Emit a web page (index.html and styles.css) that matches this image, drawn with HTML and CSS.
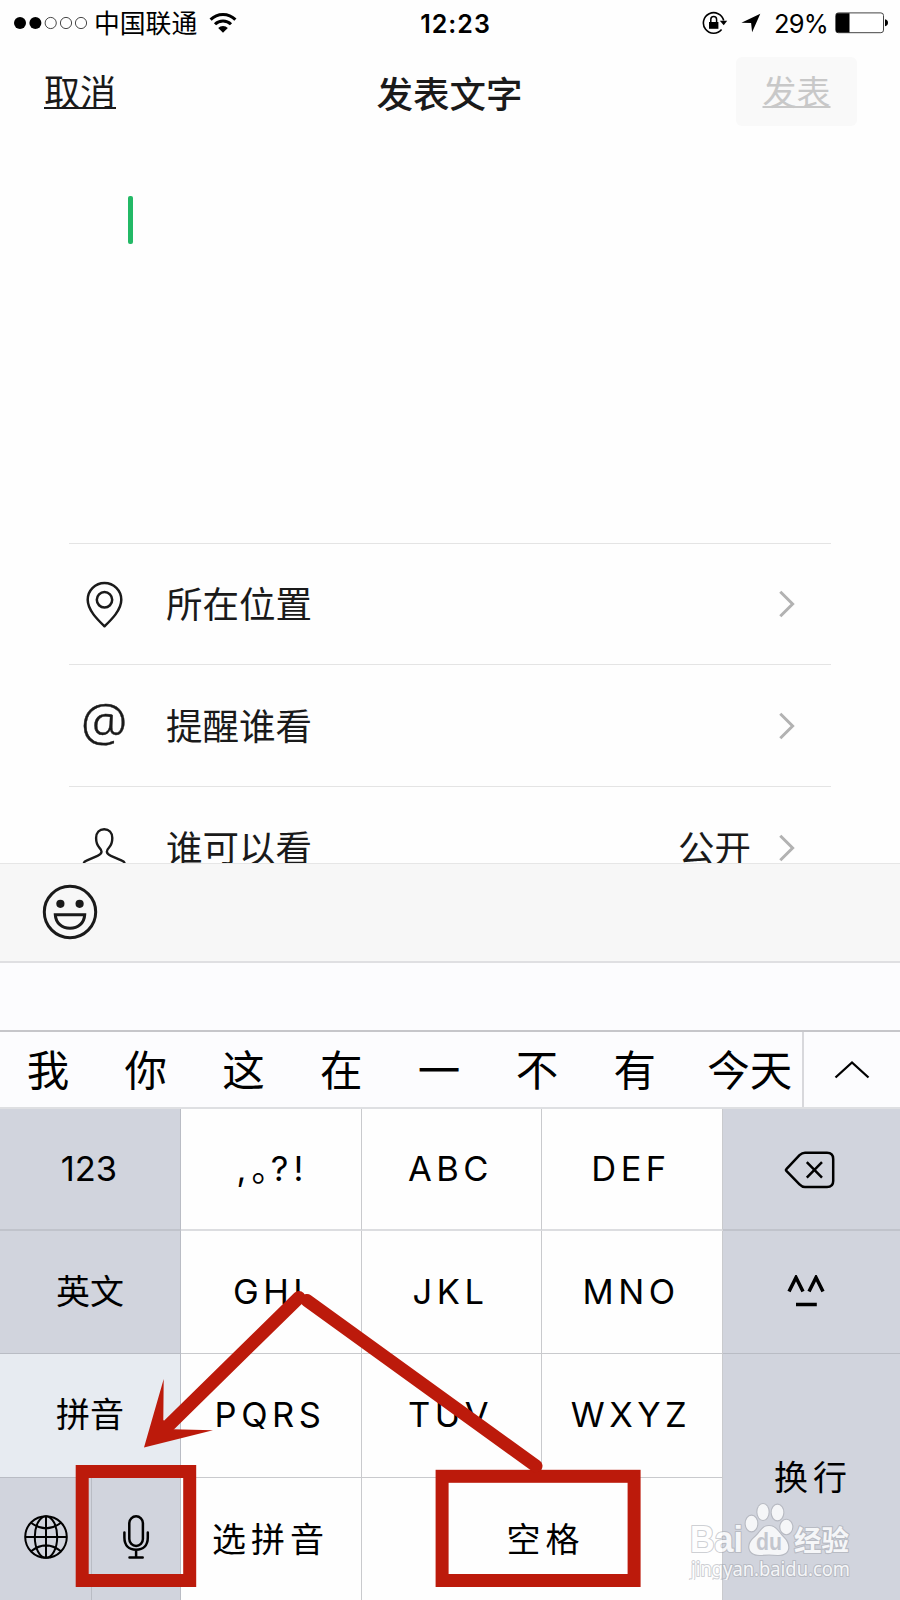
FILE: index.html
```html
<!DOCTYPE html>
<html lang="zh-CN">
<head>
<meta charset="utf-8">
<title>发表文字</title>
<link rel="stylesheet" href="styles.css">
</head>
<body>
<div class="screen">
  <div class="status">
    <div class="status-left">
      <svg class="signal" width="76" height="14" viewBox="0 0 76 14"><g fill="#000"><circle cx="6" cy="7" r="6"/><circle cx="21.4" cy="7" r="6"/></g><g fill="none" stroke="#333" stroke-width=".9"><circle cx="36.7" cy="7" r="5.6"/><circle cx="52" cy="7" r="5.6"/><circle cx="67" cy="7" r="5.6"/></g></svg>
      <span class="carrier">中国联通</span>
      <svg class="wifi" width="28" height="22" viewBox="0 0 28 22"><g fill="none" stroke="#000" stroke-width="3"><path d="M1.6 7.6a17.5 17.5 0 0 1 24.8 0"/><path d="M6 12.3a11.3 11.3 0 0 1 16 0"/></g><path d="M9.2 15.9a6.8 6.8 0 0 1 9.6 0L14 20.8z"/></svg>
    </div>
    <div class="clock">12:23</div>
    <div class="status-right">
      <svg width="26" height="24" viewBox="0 0 26 24"><path d="M21.700 9.500A10.3 10.3 0 1 0 19.600 18.600" fill="none" stroke="#000" stroke-width="1.600"/><path d="M17.800 9.800h7.400l-3.500 4.400z"/><path d="M7 11h9.400v6.800H7z"/><path d="M8.800 11V8.500a2.900 2.900 0 0 1 5.800 0V11" fill="none" stroke="#000" stroke-width="1.500"/></svg>
      <svg class="locate" width="20" height="20" viewBox="0 0 20 20"><path d="M19.300.8L.4 9.800l9.700.2 1 9.200z"/></svg>
      <span class="percent">29%</span>
      <svg class="battery" width="54" height="22" viewBox="0 0 54 22"><rect x=".7" y=".9" width="47.800" height="19.800" rx="2.600" fill="#fff" stroke="#444" stroke-width="1"/><path d="M2.500 1.200H14.500V20.500H2.500Q1 20.500 1 19V2.700Q1 1.200 2.500 1.200z"/><path d="M50 7.300q3 .8 3 3.500t-3 3.500z"/></svg>
    </div>
  </div>
  <div class="nav">
    <a class="cancel">取消</a>
    <h1 class="title">发表文字</h1>
    <div class="post"><a class="post-label">发表</a></div>
  </div>
  <div class="editor"><div class="caret"></div></div>
  <div class="list">
    <div class="row">
      <svg class="row-icon" width="44" height="50" viewBox="0 0 44 50"><g fill="none" stroke="#1a1a1a" stroke-width="2.500"><path d="M22.500 47.300C16.500 41.500 5.700 31.500 5.700 20.800A16.800 16.800 0 0 1 39.300 20.800C39.300 31.500 28.500 41.500 22.500 47.300Z" stroke-linejoin="round"/><circle cx="22.500" cy="20.800" r="7.700"/></g></svg>
      <span class="row-label">所在位置</span>
      <svg class="chevron" width="18" height="30" viewBox="0 0 18 30"><path d="M2.300 2.800L14.600 15L2.300 27.200"/></svg>
    </div>
    <div class="row row-tall">
      <span class="row-icon at">@</span>
      <span class="row-label">提醒谁看</span>
      <svg class="chevron" width="18" height="30" viewBox="0 0 18 30"><path d="M2.300 2.800L14.600 15L2.300 27.200"/></svg>
    </div>
    <div class="row row-tall row-cut">
      <svg class="row-icon" width="44" height="50" viewBox="0 0 44 50"><path d="M2 42.500V39.500Q2.300 38.500 4.500 37.600L15.500 32.800Q19.700 31 19.500 28.500Q19.400 26.800 17.500 24.800C14.900 22 14.100 18.500 14.100 15C14.100 9.500 17.500 6.200 22.200 6.200S30.300 9.500 30.300 15C30.300 18.500 29.500 22 26.900 24.800Q25 26.800 24.900 28.500Q24.700 31 28.900 32.800L39.900 37.600Q42.100 38.500 42.400 39.500V42.500" fill="none" stroke="#1a1a1a" stroke-width="2.400"/></svg>
      <span class="row-label">谁可以看</span>
      <span class="row-value">公开</span>
      <svg class="chevron" width="18" height="30" viewBox="0 0 18 30"><path d="M2.300 2.800L14.600 15L2.300 27.200"/></svg>
    </div>
  </div>
  <div class="toolbar">
    <svg width="56" height="56" viewBox="0 0 56 56"><g fill="none" stroke="#1a1a1a" stroke-width="3"><circle cx="28" cy="28" r="25.700"/><path d="M13.300 30.800H42.700C42.200 39 36 44.300 28 44.300S13.800 39 13.300 30.800Z"/></g><circle cx="18.400" cy="19.800" r="4.100" fill="#1a1a1a"/><circle cx="37.600" cy="19.800" r="4.100" fill="#1a1a1a"/></svg>
  </div>
  <div class="spacer"></div>
  <div class="candidates">
    <span>我</span><span>你</span><span>这</span><span>在</span><span>一</span><span>不</span><span>有</span><span class="last">今天</span>
    <div class="expand"><svg width="36" height="20" viewBox="0 0 36 20"><path d="M1.500 17.500L18 2.500L34.500 17.500" fill="none" stroke="#000" stroke-width="2.300"/></svg></div>
  </div>
  <div class="keys">
    <div class="key top side num">123</div>
    <div class="key top punct"><span>,</span><span class="stop">。</span><span>?</span><span>!</span></div>
    <div class="key top">ABC</div>
    <div class="key top">DEF</div>
    <div class="key top side end"><svg class="backspace" width="52" height="38" viewBox="0 0 52 38"><path d="M2.600 17.800L15.500 4.200Q18.200 1.700 21 1.700H43Q49.200 1.700 49.200 8V30Q49.200 36 43 36H21Q18.200 36 15.500 33.300L2.600 20.200Q1.400 19 2.600 17.800Z" fill="none" stroke="#000" stroke-width="2.500"/><path d="M22.800 11.200L38 26.600M38 11.200L22.800 26.600" stroke="#000" stroke-width="2.500"/></svg></div>

    <div class="key side cn">英文</div>
    <div class="key">GHI</div>
    <div class="key">JKL</div>
    <div class="key">MNO</div>
    <div class="key side end"><svg class="face" width="38" height="32" viewBox="0 0 38 32"><path d="M2 16.500L9 2.500L16 16.500M22 16.500L29 2.500L36 16.500M9 29.500H29.800" fill="none" stroke="#000" stroke-width="3.500"/></svg></div>

    <div class="key side cn active">拼音</div>
    <div class="key">PQRS</div>
    <div class="key">TUV</div>
    <div class="key">WXYZ</div>
    <div class="key side end enter cn wide">换行</div>

    <div class="key side pair">
      <div class="half globe"><svg width="46" height="46" viewBox="0 0 46 46"><g fill="none" stroke="#000" stroke-width="2"><circle cx="23" cy="23" r="20.800"/><ellipse cx="23" cy="23" rx="11.200" ry="20.800"/><path d="M23 2.200V43.800M2.200 23H43.800M8 8.700Q23 20 38 8.700M8 37.300Q23 25.500 38 37.300"/></g></svg></div>
      <div class="half"><svg width="30" height="46" viewBox="0 0 30 46"><g fill="none" stroke="#000" stroke-width="2.500" stroke-linecap="round"><rect x="8.300" y="2.300" width="13.600" height="29.600" rx="6.800"/><path d="M3.400 18.500V23.500C3.400 31.500 8 35.700 15.100 35.700S26.800 31.500 26.800 23.500V18.500M15.100 35.700V43.500M8.500 43.500H21.700"/></g></svg></div>
    </div>
    <div class="key cn wide select">选拼音</div>
    <div class="key cn wide space">空格</div>
  </div>

  <svg class="marks" width="900" height="1600" viewBox="0 0 900 1600">
    <g fill="none" stroke="#bc1a0b">
      <rect x="82.200" y="1471.500" width="107.500" height="109" stroke-width="13"/>
      <rect x="442.100" y="1476.300" width="192" height="104.200" stroke-width="13"/>
      <path d="M299 1297.500L166 1428" stroke-width="13" stroke-linecap="round"/>
      <path d="M307 1300.500L536 1466" stroke-width="13" stroke-linecap="round"/>
    </g>
    <path d="M144 1447.500L163.700 1379L163.300 1420L173 1429.300L213 1430.300Z" fill="#bc1a0b"/>
  </svg>

  <svg class="watermark" width="180" height="90" viewBox="0 0 180 90">
    <g fill="#fff" stroke="#a0a3ab" stroke-opacity=".65" stroke-width="2.200" stroke-linejoin="round" paint-order="stroke" opacity=".8">
      <text class="wm-brand" x="10" y="62" textLength="53" lengthAdjust="spacingAndGlyphs">Bai</text>
      <ellipse cx="71.500" cy="33.500" rx="5.800" ry="7.800"/>
      <ellipse cx="83" cy="22" rx="5.600" ry="8"/>
      <ellipse cx="97.500" cy="22.500" rx="5.800" ry="7.800"/>
      <ellipse cx="106.300" cy="37" rx="6" ry="7.200"/>
      <path d="M89 36C96 36 98 42 104 48S111 65 98 65Q93 64.500 89 64.500T80 65C67 65 67 54 74 48S82 36 89 36Z"/>
      <text class="wm-cn" x="114" y="61" textLength="55" lengthAdjust="spacingAndGlyphs">经验</text>
      <text class="wm-url" x="11" y="85.500" textLength="159" lengthAdjust="spacingAndGlyphs">jingyan.baidu.com</text>
    </g>
    <text class="wm-du" x="76" y="60" textLength="26" lengthAdjust="spacingAndGlyphs">du</text>
  </svg>
</div>
</body>
</html>
```
FILE: styles.css
```css
* { box-sizing: border-box; }
body { margin: 0; background: #fefefe; font-family: "Inter", "Noto Sans CJK SC", sans-serif; color: #000; }
.screen { position: relative; width: 900px; height: 1600px; overflow: hidden; display: flex; flex-direction: column; background: #fefefe; }
svg { display: block; flex: none; }
span, a { white-space: nowrap; }

.status { height: 44px; display: grid; grid-template-columns: 1fr auto 1fr; align-items: center; padding: 0 11px 0 14px; }
.status-left, .status-right { display: flex; align-items: center; }
.status-right { justify-content: flex-end; }
.carrier { font: 25.800px/42px "Noto Sans CJK SC", sans-serif; margin: -2px 0 0 4px; }
.wifi { margin: -1px 0 0 12px; }
.clock { font-size: 25px; line-height: 44px; font-weight: 600; letter-spacing: 1px; padding-top: 2px; padding-left: 8px; }
.locate { margin: 0 0 0 13px; }
.percent { font-size: 25.500px; line-height: 44px; margin: 1px 7px 0 13px; letter-spacing: -.8px; }

.nav { height: 96px; display: grid; grid-template-columns: 1fr auto 1fr; align-items: start; padding: 13px 43px 0 44px; font-family: "Noto Sans CJK SC", sans-serif; color: #1a1a1a; }
.cancel { font-size: 36px; line-height: 67px; text-decoration: underline; text-decoration-thickness: 2px; text-underline-offset: 1px; text-decoration-skip-ink: none; }
.title { margin: 0 2px 0 0; font-size: 36.500px; line-height: 71px; font-weight: 500; }
.post { justify-self: end; width: 121px; height: 69px; border-radius: 6px; background: #f9f9f9; text-align: center; }
.post-label { font-size: 34px; line-height: 67px; color: #c8c8c8; text-decoration: underline; text-decoration-thickness: 2px; text-underline-offset: 1px; text-decoration-skip-ink: none; }

.editor { height: 403px; padding: 56px 0 0 128px; }
.caret { width: 4.500px; height: 48px; border-radius: 2px; background: #23b966; }

.list { height: 320px; margin: 0 69px; overflow: hidden; }
.row { height: 121px; border-top: 1px solid #e4e4e4; display: flex; align-items: center; padding: 0 35px 0 13px; font-family: "Noto Sans CJK SC", sans-serif; font-size: 36.500px; color: #1a1a1a; }
.row-tall { height: 122px; }
.row-icon { width: 44px; flex: none; }
.at { font-family: "Noto Sans", sans-serif; font-weight: 300; font-size: 52px; line-height: 60px; text-align: center; margin-top: -9px; -webkit-text-stroke: .4px #1a1a1a; display: flex; justify-content: center; }
.row-label { margin-left: 40px; line-height: 58px; margin-top: -2px; }
.chevron { margin-left: auto; }
.chevron path { fill: none; stroke: #b2b2b2; stroke-width: 3; }
.row-value { margin: -2px 0 0 auto; }
.row-value + .chevron { margin-left: 27px; }

.toolbar { height: 98px; background: #f7f7f7; border-top: 1px solid #e6e6e6; padding: 20px 0 0 41.500px; }
.spacer { height: 71px; background: #fcfcfe; border-top: 2px solid #dfdfe2; border-bottom: 2px solid #c6c6ca; }
.candidates { height: 77px; background: #fcfcfe; border-bottom: 2px solid #dedfe2; display: flex; font: 42.500px/71px "Noto Sans CJK SC", sans-serif; }
.candidates span { width: 97.800px; text-align: center; flex: none; }
.candidates span:first-child { margin-left: -1px; }
.candidates .last { width: 118.400px; padding-left: 14px; }
.expand { flex: 1; border-left: 2px solid #d8d8dc; display: flex; justify-content: center; padding-top: 28px; }

.keys { flex: 1; display: grid; grid-template-columns: 181px 181px 180px 181px 177px; grid-template-rows: 122px 123px 124px 122px; }
.key { background: #fefefe; border-right: 1px solid #c9cacd; border-bottom: 1px solid #c9cacd; display: flex; align-items: center; justify-content: center; font-size: 34.500px; letter-spacing: 4.500px; padding: 0 2px 2px 0; white-space: nowrap; }
.key.top { border-bottom: 2px solid #dcdde0; padding-bottom: 1px; }
.key.side { border-color: #b9bcc4; }
.side { background: #d1d4dd; letter-spacing: 0; }
.key.top.side { border-bottom-color: #c0c3cb; }
.num { font-size: 34.500px; }
.key.cn { font-family: "Noto Sans CJK SC", sans-serif; padding: 0 0 6px; font-size: 34px; }
.key.wide { letter-spacing: 5px; }
.key.select { padding: 0 1px 4px 0; }
.key.space { padding: 0 0 4px 7px; }
.key.enter { padding: 0 0 4px 3px; }
.active { background: #e7ebf1; }
.key.end { border-right: 0; }
.enter { grid-row: span 2; }
.space { grid-column: span 2; }
.key.enter, .key.space, .key.select, .key.pair { border-bottom: 0; }
.key.pair { padding: 0; }
.half { flex: 1; height: 100%; display: flex; align-items: center; justify-content: center; padding-bottom: 4px; }
.globe { flex: 0 0 92px; border-right: 1px solid #b9bcc4; }
.punct { letter-spacing: 0; gap: 5px; }
.stop { font-family: "Noto Sans CJK SC", sans-serif; font-feature-settings: "halt"; margin: -6px -3px 0 0; line-height: 44px; }
.backspace { margin: 2px 0 0 -2px; }
.face { margin-left: -9px; }

.marks { position: absolute; left: 0; top: 0; }
.watermark { position: absolute; left: 680px; top: 1490px; }
.wm-brand { font: 700 36px "Liberation Sans", sans-serif; }
.wm-cn { font: 700 28px "Noto Sans CJK SC", sans-serif; }
.wm-url { font: 400 20px "Noto Sans", sans-serif; }
.wm-du { font: 700 23px "Liberation Sans", sans-serif; fill: #c3c6ce; }
```
